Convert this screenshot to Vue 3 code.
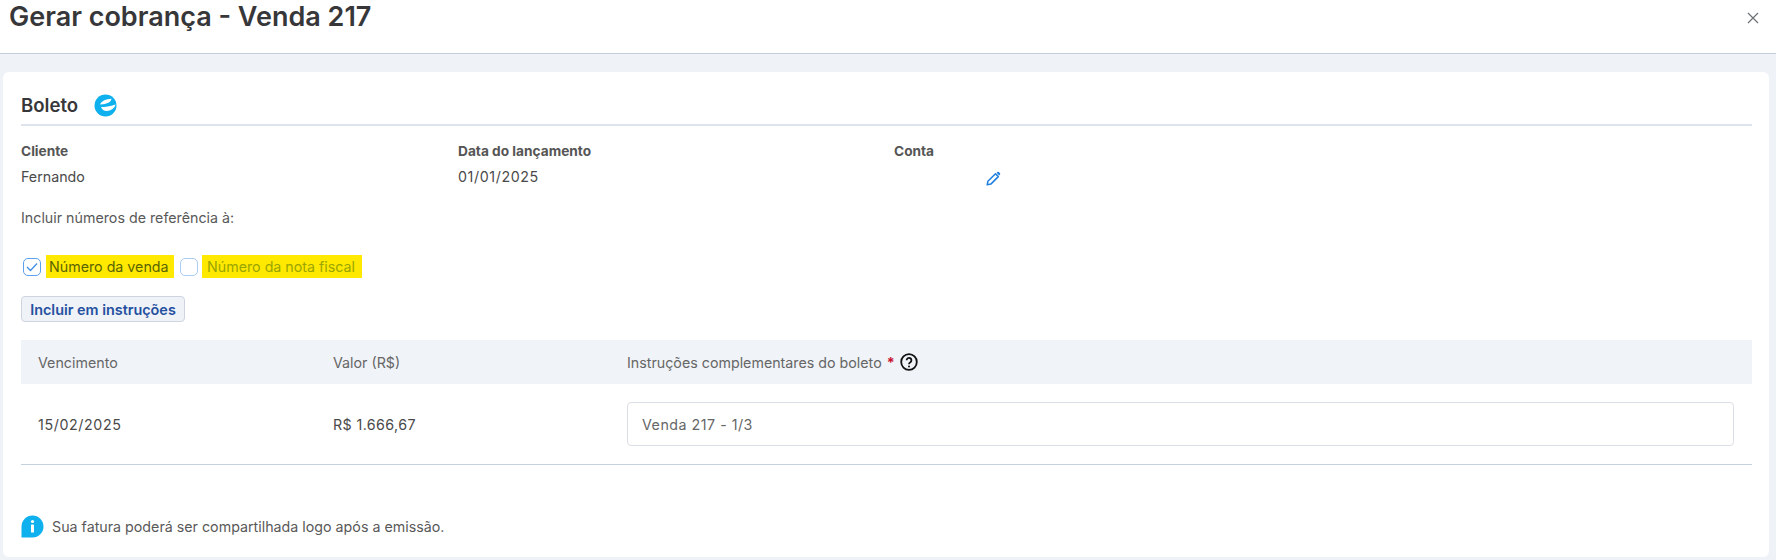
<script setup>
const rows = [{ due: '15/02/2025', value: 'R$ 1.666,67', text: 'Venda 217 - 1/3' }]
</script>

<template>
  <div class="page">
    <header class="top">
      <h1>Gerar cobrança - Venda 217</h1>
      <svg class="close" width="12" height="12" viewBox="0 0 12 12"><path d="M1 1l10 10M11 1L1 11" stroke="#6b7075" stroke-width="1.2" fill="none"/></svg>
    </header>
    <main class="card">
      <div class="title">
        <h2>Boleto</h2>
        <svg class="logo" width="23" height="23" viewBox="0 0 23 23">
          <circle cx="11.5" cy="11.5" r="11" fill="#0fb0ee"/>
          <path d="M6 10.5C7.5 7 12 5 17.5 4.8 17 8 13.5 10.2 6 10.5Z" fill="#fff"/>
          <path d="M7 13C11 13 16 12.8 21.5 10.5 21 14 17 17 12.5 17 10 17 8 15.5 7 13Z" fill="#fff"/>
        </svg>
      </div>
      <div class="meta">
        <div><b>Cliente</b><span>Fernando</span></div>
        <div><b>Data do lançamento</b><span class="num">01/01/2025</span></div>
        <div class="account">
          <b>Conta</b>
          <svg class="pencil" width="15" height="15" viewBox="0 0 15 15" fill="none">
            <path d="M1.2 13.8l.7-3.6 7.6-7.4 2.8 2.8-7.5 7.5-3.6.7Z" stroke="#1f7fe0" stroke-width="1.5" stroke-linejoin="round"/>
            <path d="M10.6 1.7l.8-.7a1 1 0 0 1 1.4 0l1.2 1.2a1 1 0 0 1 0 1.4l-.8.8Z" fill="#1f7fe0"/>
          </svg>
        </div>
      </div>
      <p class="hint">Incluir números de referência à:</p>
      <div class="checks">
        <span class="box on">
          <svg width="12" height="10" viewBox="0 0 12 10" fill="none"><path d="M1 5l3.5 3.5L11 1.5" stroke="#3f8fe8" stroke-width="1.3"/></svg>
        </span>
        <span class="mark">Número da venda</span>
        <span class="box"></span>
        <span class="mark off">Número da nota fiscal</span>
      </div>
      <button class="action" type="button">Incluir em instruções</button>
      <section class="table">
        <div class="row head">
          <span>Vencimento</span>
          <span>Valor (R$)</span>
          <span class="instr">
            <span>Instruções complementares do boleto</span>
            <i>*</i>
            <svg width="18" height="18" viewBox="0 0 18 18" fill="none">
              <circle cx="9" cy="9" r="7.8" stroke="#111" stroke-width="1.8"/>
              <path d="M6.6 7.2A2.4 2.4 0 1 1 10.4 9.2C9.4 9.8 9 10.2 9 11.2" stroke="#111" stroke-width="1.8"/>
              <circle cx="9" cy="13.4" r="1" fill="#111"/>
            </svg>
          </span>
        </div>
        <div v-for="r in rows" :key="r.due" class="row body">
          <span class="num">{{ r.due }}</span>
          <span class="money">{{ r.value }}</span>
          <div class="input">{{ r.text }}</div>
        </div>
      </section>
      <div class="note">
        <svg width="23" height="23" viewBox="0 0 23 23">
          <path d="M11.5 0.5a11 11 0 0 1 0 22H0.5V11.5a11 11 0 0 1 11-11Z" fill="#0fb0ee"/>
          <circle cx="11.5" cy="6.5" r="1.6" fill="#fff"/>
          <rect x="10" y="9.5" width="3" height="8" rx=".6" fill="#fff"/>
        </svg>
        <span>Sua fatura poderá ser compartilhada logo após a emissão.</span>
      </div>
    </main>
  </div>
</template>

<style>
body { margin: 0; background: #eff2f7; }
</style>

<style scoped>
.page {
  width: 1776px;
  height: 560px;
  overflow: hidden;
  background: #eff2f7;
  font-family: Inter, "Noto Sans", sans-serif;
  color: #4a4a4a;
  font-size: 14.25px;
}
.top {
  height: 54px;
  box-sizing: border-box;
  background: #fff;
  border-bottom: 1px solid #c5cedb;
  display: flex;
  justify-content: space-between;
  align-items: flex-start;
  padding: 0 17px 0 9px;
}
h1 {
  margin: 0;
  font-size: 27px;
  line-height: 34px;
  font-weight: 600;
  color: #37373a;
}
.close { margin-top: 12px; }
.card {
  margin: 18px 7px 0 3px;
  height: 485px;
  box-sizing: border-box;
  background: #fff;
  border-radius: 6px;
  padding: 18px 17px 0 18px;
}
.title {
  display: flex;
  align-items: center;
  gap: 16px;
  height: 30px;
  padding-bottom: 4px;
  border-bottom: 2px solid #dfe4ec;
}
h2 {
  margin: 0;
  font-size: 18.6px;
  font-weight: 600;
  color: #37373a;
}
.meta {
  display: grid;
  grid-template-columns: 437px 436px 1fr;
  margin-top: 16px;
}
.meta b {
  display: block;
  font-weight: 700;
  font-size: 13.7px;
  line-height: 18px;
  color: #555;
}
.meta span {
  display: block;
  margin-top: 8px;
  line-height: 18px;
}
.num { letter-spacing: 0.6px; }
.money { letter-spacing: 0.4px; }
.pencil { display: block; margin: 11px 0 0 92px; }
.hint {
  margin: 23px 0 0;
  line-height: 18px;
  color: #595959;
}
.checks {
  display: flex;
  align-items: center;
  height: 23px;
  margin-top: 28px;
  padding-left: 2px;
}
.box {
  width: 18px;
  height: 18px;
  box-sizing: border-box;
  border: 1.5px solid #a9cdf5;
  border-radius: 5px;
  display: flex;
  align-items: center;
  justify-content: center;
  background: #fff;
}
.box.on { border-color: #5aa2ee; }
.mark {
  background: #ffe900;
  line-height: 23px;
  box-sizing: border-box;
  width: 128px;
  padding-left: 3px;
  margin: 0 6px 0 5px;
  color: #5a6400;
  white-space: nowrap;
}
.mark.off {
  color: #9aa500;
  width: 160px;
  padding-left: 5px;
  margin: 0 0 0 4px;
}
.action {
  display: block;
  margin-top: 18px;
  width: 164px;
  height: 26px;
  padding: 0;
  font: 600 14.4px Inter, "Noto Sans", sans-serif;
  color: #24509f;
  background: #eff2f7;
  border: 1px solid #ced5e0;
  border-radius: 4px;
}
.table {
  margin-top: 18px;
  border-bottom: 1px solid #c5d1e0;
}
.row {
  display: grid;
  grid-template-columns: 295px 294px 1fr;
  padding: 0 18px 0 17px;
  align-items: center;
}
.head {
  height: 44px;
  background: #f0f3f8;
  color: #666;
}
.instr { display: flex; align-items: center; gap: 5px; }
.instr i { color: #c8102e; font-style: normal; font-weight: 700; }
.body { height: 80px; }
.input {
  height: 44px;
  box-sizing: border-box;
  border: 1.5px solid #dadfe6;
  border-radius: 4px;
  display: flex;
  align-items: center;
  padding-left: 14px;
  color: #666;
  letter-spacing: 0.5px;
}
.note {
  display: flex;
  align-items: center;
  gap: 8px;
  margin-top: 50px;
  color: #595959;
}
</style>
